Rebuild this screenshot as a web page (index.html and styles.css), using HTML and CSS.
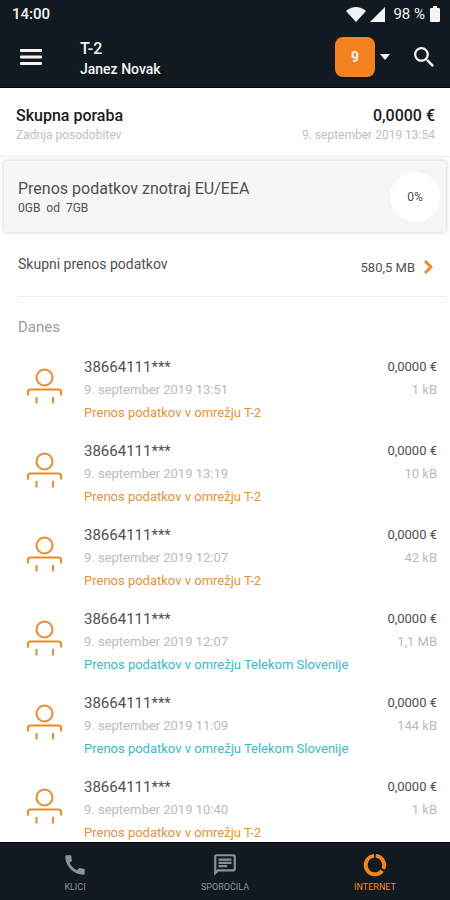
FILE: index.html
```html
<!DOCTYPE html>
<html lang="sl">
<head>
    <meta charset="UTF-8">
    <meta name="viewport" content="width=device-width, initial-scale=1.0">
    <title>T-2 - Internet</title>
    <link rel="stylesheet" href="styles.css">
</head>
<body>
    <svg class="sprite" aria-hidden="true">
        <symbol id="person" viewBox="0 0 36 36">
            <circle cx="18.500" cy="9.500" r="8"/>
            <path d="M2 27.500V24q0-2.500 2.500-2.500h28q2.500 0 2.500 2.500v3.500M10.500 29v6.500M27 29v6.500"/>
        </symbol>
    </svg>

    <header class="top">
        <!-- Status bar -->
        <div class="status">
            <span>14:00</span>
            <div class="status-icons">
                <svg width="20" height="15" viewBox="0 0 20 15"><path d="M0 4Q10-4 20 4L10 15z"/></svg>
                <svg width="15" height="15" viewBox="0 0 15 15"><path d="M15 0v15H0z"/></svg>
                <span class="percent">98 %</span>
                <svg width="10" height="16" viewBox="0 0 10 16"><path d="M3 0h4v2h2q1 0 1 1v12q0 1-1 1H1q-1 0-1-1V3q0-1 1-1h2z"/></svg>
            </div>
        </div>

        <!-- App bar -->
        <div class="appbar">
            <button class="icon-btn" aria-label="Meni">
                <svg width="22" height="16" viewBox="0 0 22 16"><path d="M1 0h20q1 0 1 1v1q0 1-1 1H1Q0 3 0 2V1q0-1 1-1zM1 6.500h20q1 0 1 1v1q0 1-1 1H1q-1 0-1-1v-1q0-1 1-1zM1 13h20q1 0 1 1v1q0 1-1 1H1q-1 0-1-1v-1q0-1 1-1z"/></svg>
            </button>
            <div class="account">
                <h1>T-2</h1>
                <p>Janez Novak</p>
            </div>
            <button class="month" aria-label="Mesec 9">
                <span class="month-badge">9</span>
                <svg width="10" height="6" viewBox="0 0 10 6"><path d="M0 0h10L5 6z"/></svg>
            </button>
            <button class="icon-btn" aria-label="Iskanje">
                <svg width="20" height="20" viewBox="3 3 17.500 17.500"><path d="M15.500 14h-.79l-.28-.27A6.470 6.470 0 0 0 16 9.500 6.500 6.500 0 1 0 9.500 16c1.610 0 3.090-.59 4.230-1.570l.27.28v.79l5 4.990L20.490 19l-4.990-5zm-6 0C7.010 14 5 11.990 5 9.500S7.010 5 9.500 5 14 7.010 14 9.500 11.990 14 9.500 14z"/></svg>
            </button>
        </div>
    </header>

    <main>
        <section class="summary">
            <div class="line total">
                <h2>Skupna poraba</h2>
                <span>0,0000 €</span>
            </div>
            <div class="line updated">
                <span>Zadnja posodobitev</span>
                <span>9. september 2019 13:54</span>
            </div>
        </section>

        <section class="quota">
            <div>
                <h3>Prenos podatkov znotraj EU/EEA</h3>
                <p>0GB&nbsp; od&nbsp; 7GB</p>
            </div>
            <span class="quota-circle">0%</span>
        </section>

        <a class="transfer" href="#transfer">
            <span>Skupni prenos podatkov</span>
            <span class="transfer-value">580,5 MB
                <svg width="9" height="14" viewBox="0 0 9 14"><path d="M1 1l6 6-6 6"/></svg>
            </span>
        </a>

        <h4 class="day">Danes</h4>
        <ul class="records">
            <li>
                <svg class="person"><use href="#person"/></svg>
                <div class="info">
                    <p class="number">38664111***</p>
                    <p class="date">9. september 2019 13:51</p>
                    <p class="network">Prenos podatkov v omrežju T-2</p>
                </div>
                <div class="cost">
                    <p class="price">0,0000 €</p>
                    <p class="size">1 kB</p>
                </div>
            </li>
            <li>
                <svg class="person"><use href="#person"/></svg>
                <div class="info">
                    <p class="number">38664111***</p>
                    <p class="date">9. september 2019 13:19</p>
                    <p class="network">Prenos podatkov v omrežju T-2</p>
                </div>
                <div class="cost">
                    <p class="price">0,0000 €</p>
                    <p class="size">10 kB</p>
                </div>
            </li>
            <li>
                <svg class="person"><use href="#person"/></svg>
                <div class="info">
                    <p class="number">38664111***</p>
                    <p class="date">9. september 2019 12:07</p>
                    <p class="network">Prenos podatkov v omrežju T-2</p>
                </div>
                <div class="cost">
                    <p class="price">0,0000 €</p>
                    <p class="size">42 kB</p>
                </div>
            </li>
            <li>
                <svg class="person"><use href="#person"/></svg>
                <div class="info">
                    <p class="number">38664111***</p>
                    <p class="date">9. september 2019 12:07</p>
                    <p class="network telekom">Prenos podatkov v omrežju Telekom Slovenije</p>
                </div>
                <div class="cost">
                    <p class="price">0,0000 €</p>
                    <p class="size">1,1 MB</p>
                </div>
            </li>
            <li>
                <svg class="person"><use href="#person"/></svg>
                <div class="info">
                    <p class="number">38664111***</p>
                    <p class="date">9. september 2019 11:09</p>
                    <p class="network telekom">Prenos podatkov v omrežju Telekom Slovenije</p>
                </div>
                <div class="cost">
                    <p class="price">0,0000 €</p>
                    <p class="size">144 kB</p>
                </div>
            </li>
            <li>
                <svg class="person"><use href="#person"/></svg>
                <div class="info">
                    <p class="number">38664111***</p>
                    <p class="date">9. september 2019 10:40</p>
                    <p class="network">Prenos podatkov v omrežju T-2</p>
                </div>
                <div class="cost">
                    <p class="price">0,0000 €</p>
                    <p class="size">1 kB</p>
                </div>
            </li>
        </ul>
    </main>

    <!-- Bottom tabs -->
    <nav class="tabs">
        <a class="tab" href="#klici">
            <svg width="26" height="26" viewBox="0 0 24 24"><path d="M20.010 15.380c-1.230 0-2.420-.2-3.530-.56a.977.977 0 0 0-1.010.24l-1.570 1.970c-2.830-1.350-5.480-3.900-6.890-6.830l1.950-1.660c.27-.28.35-.67.24-1.020-.37-1.110-.56-2.300-.56-3.530 0-.54-.45-.99-.99-.99H4.190C3.650 3 3 3.240 3 3.990 3 13.280 10.730 21 20.010 21c.71 0 .99-.63.99-1.180v-3.450c0-.54-.45-.99-.99-.99z"/></svg>
            <span>KLICI</span>
        </a>
        <a class="tab" href="#sporocila">
            <svg width="26" height="26" viewBox="0 0 24 24"><path d="M4 4h16v12H5.170L4 17.170V4m0-2c-1.100 0-2 .9-2 2v18l4-4h14c1.100 0 2-.9 2-2V4c0-1.100-.9-2-2-2H4zm2 10h8v2H6v-2zm0-3h12v2H6V9zm0-3h12v2H6V6z"/></svg>
            <span>SPOROČILA</span>
        </a>
        <a class="tab active" href="#internet">
            <svg width="26" height="26" viewBox="0 0 24 24"><g fill="none" stroke="currentColor" stroke-width="3.600"><path d="M12.800 3.600A8.500 8.500 0 0 1 19.700 15.600"/><path d="M18.600 17.300A8.500 8.500 0 1 1 11.200 3.600"/></g></svg>
            <span>INTERNET</span>
        </a>
    </nav>
</body>
</html>
```

FILE: styles.css
```css
* {
    box-sizing: border-box;
}

body {
    margin: 0;
    height: 100vh;
    display: flex;
    flex-direction: column;
    font-family: Roboto, "Liberation Sans", sans-serif;
    background: #fefefe;
    color: #505050;
}

h1, h2, h3, h4, p, ul {
    margin: 0;
    padding: 0;
    font-weight: 400;
}

a {
    color: inherit;
    text-decoration: none;
}

button {
    padding: 0;
    border: none;
    background: none;
    color: inherit;
    font: inherit;
    cursor: pointer;
}

svg {
    display: block;
    fill: currentColor;
}

.sprite {
    display: none;
}

/* Header */
.top {
    background: #121a21;
    color: #f4f4f4;
    border-bottom: 1px solid #05070a;
}

.status {
    display: flex;
    justify-content: space-between;
    align-items: center;
    height: 28px;
    padding: 0 10px 0 12px;
    font-size: 15px;
    font-weight: 500;
}

.status-icons {
    display: flex;
    align-items: center;
    gap: 4px;
}

.percent {
    padding: 0 1px 0 4px;
    font-weight: 400;
}

.appbar {
    display: flex;
    align-items: center;
    height: 59px;
    padding: 0 16px 2px 20px;
}

.account {
    flex: 1;
    padding: 4px 0 0 38px;
    font-size: 14px;
    line-height: 20px;
}

.account h1 {
    font-size: 16px;
    font-weight: 500;
}

.account p {
    font-weight: 500;
}

.month {
    display: flex;
    align-items: center;
    gap: 5px;
    margin-right: 24px;
}

.month-badge {
    width: 40px;
    border-radius: 8px;
    background: #f58220;
    font-size: 14px;
    font-weight: 700;
    line-height: 40px;
}

/* Content */
main {
    flex: 1;
    min-height: 0;
    overflow: hidden;
}

.summary {
    padding: 17px 15px 12px 16px;
    border-bottom: 1px solid #eee;
}

.line {
    display: flex;
    justify-content: space-between;
}

.total {
    color: #1c1c1c;
    font-size: 16px;
    line-height: 21px;
}

.total h2, .total span {
    font-size: 16px;
    font-weight: 500;
}

.updated {
    color: #c0c0c0;
    font-size: 12px;
    line-height: 18px;
}

.quota {
    display: flex;
    justify-content: space-between;
    align-items: center;
    margin: 4px 4px 0;
    height: 71px;
    padding: 0 6px 0 14px;
    background: #f6f6f6;
    box-shadow: 0 0 4px #ccc;
}

.quota h3 {
    padding-top: 2px;
    font-size: 16px;
    line-height: 20px;
}

.quota p {
    font-size: 12px;
    line-height: 18px;
}

.quota-circle {
    width: 50px;
    border-radius: 50%;
    background: #fff;
    font-size: 12px;
    line-height: 50px;
    text-align: center;
}

.transfer {
    display: flex;
    justify-content: space-between;
    align-items: center;
    height: 65px;
    margin: 0 4px 0 18px;
    padding-right: 13px;
    border-bottom: 1px solid #eee;
    font-size: 14px;
}

.transfer-value {
    display: flex;
    align-items: center;
    gap: 9px;
    padding-top: 6px;
    font-size: 13px;
}

.transfer-value svg {
    fill: none;
    stroke: #e98a2c;
    stroke-width: 3;
}

.day {
    padding: 20px 18px 18px;
    color: #999da0;
    font-size: 15px;
    line-height: 20px;
}

.records {
    list-style: none;
}

.records li {
    display: flex;
    padding: 1px 13px 15px 26px;
}

.person {
    width: 36px;
    height: 36px;
    margin: 12px 22px 0 0;
    fill: none;
    stroke: #e98a2c;
    stroke-width: 2;
}

.info {
    flex: 1;
}

.number {
    font-size: 15px;
    line-height: 22px;
}

.date, .size {
    color: #b9bcbe;
    font-size: 13px;
    line-height: 24px;
}

.network {
    color: #e39339;
    font-size: 13px;
    line-height: 22px;
}

.telekom {
    color: #35bcc9;
}

.cost {
    text-align: right;
}

.price {
    font-size: 13px;
    line-height: 22px;
}

/* Bottom tabs */
.tabs {
    display: flex;
    height: 58px;
    border-top: 1px solid #05070a;
    background: #121a21;
    color: #8d9196;
}

.tab {
    flex: 1;
    display: flex;
    flex-direction: column;
    align-items: center;
    padding-top: 9px;
    font-size: 9px;
    line-height: 18px;
}

.tab.active {
    color: #f58220;
}
```
